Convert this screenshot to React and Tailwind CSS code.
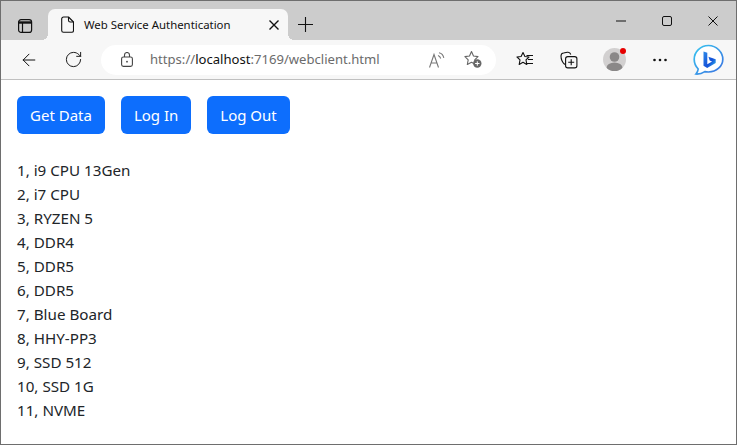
import { ArrowLeft, RotateCw } from "lucide-react";

const items = [
  "1, i9 CPU 13Gen",
  "2, i7 CPU",
  "3, RYZEN 5",
  "4, DDR4",
  "5, DDR5",
  "6, DDR5",
  "7, Blue Board",
  "8, HHY-PP3",
  "9, SSD 512",
  "10, SSD 1G",
  "11, NVME",
];

const TabsIcon = () => (
  <svg width="16" height="16" viewBox="0 0 16 16" fill="none" stroke="#111" strokeWidth="1.2">
    <rect x="1.6" y="1.600" width="13" height="12.800" rx="2.500" />
    <path d="M1.600 4.500h13" strokeWidth="2.400" />
    <path d="M5.500 5v9" />
  </svg>
);

const FileIcon = () => (
  <svg width="13" height="17" viewBox="0 0 13 17" fill="none" stroke="#111" strokeWidth="1.1" strokeLinejoin="round">
    <path d="M2.500 1h5l5 5v8.500a1.800 1.800 0 0 1-1.800 1.800H2.500A1.800 1.800 0 0 1 .7 14.500V2.800A1.800 1.800 0 0 1 2.500 1z" />
    <path d="M7.500 1v3.200a1.800 1.800 0 0 0 1.800 1.800h3.200" />
  </svg>
);

const CloseIcon = ({ size, width }) => (
  <svg width={size} height={size} viewBox="0 0 10 10" stroke="#111" strokeWidth={width}>
    <path d="M.5.500l9 9M9.500.500l-9 9" />
  </svg>
);

const PlusIcon = () => (
  <svg width="15" height="15" viewBox="0 0 15 15" stroke="#111" strokeWidth="1.100">
    <path d="M7.500 0v15M0 7.500h15" />
  </svg>
);

const MinIcon = () => (
  <svg width="10" height="2" viewBox="0 0 10 2" stroke="#111" strokeWidth="1">
    <path d="M0 1h10" />
  </svg>
);

const MaxIcon = () => (
  <svg width="10" height="10" viewBox="0 0 10 10" fill="none" stroke="#111" strokeWidth="1">
    <rect x=".5" y=".5" width="9" height="9" rx="1.500" />
  </svg>
);

const LockIcon = () => (
  <svg width="12" height="15" viewBox="0 0 12 15" fill="none" stroke="#444" strokeWidth="1.100">
    <rect x=".6" y="5" width="10.800" height="9.400" rx="1.800" />
    <path d="M3.500 5V3a2.500 2.500 0 0 1 5 0v2" />
    <circle cx="6" cy="9.700" r=".9" fill="#444" stroke="none" />
  </svg>
);

const ReadAloud = () => (
  <svg width="16" height="16" viewBox="0 0 16 16" fill="none" stroke="#777" strokeWidth="1.100">
    <path d="M.5 15.500 L5 2.500 L9.500 15.500 M2 11h6" />
    <path d="M9 3.500c1.500.5 2.300 1.500 2.700 3M10 .8c2.500.6 4.300 2.600 4.800 5" />
  </svg>
);

const FavAdd = () => (
  <svg width="18" height="19" viewBox="0 0 18 19" fill="none">
    <path d="M7.500 1.500l2 4.500 4.500.6-3.300 3.200.9 4.700-4.100-2.300-4.200 2.300.9-4.700L.9 6.600 5.500 6z" stroke="#666" strokeWidth="1.100" strokeLinejoin="round" />
    <circle cx="13.300" cy="13.500" r="4.200" fill="#666" />
    <path d="M13.300 11.300v4.400M11.100 13.500h4.400" stroke="#fff" strokeWidth="1" />
  </svg>
);

const Favorites = () => (
  <svg width="17" height="17" viewBox="0 0 17 17" fill="none" stroke="#111" strokeWidth="1.100">
    <path d="M7 1.500l1.900 4 4.100.5-3 2.900.8 4.600L7 11.300l-3.800 2.200.8-4.600L1 6l4.100-.5z" strokeLinejoin="round" />
    <path d="M10.500 4.500H17M12 8.500h5M11 12.500h6" />
  </svg>
);

const Collections = () => (
  <svg width="18" height="18" viewBox="0 0 18 18" fill="none" stroke="#111" strokeWidth="1.100">
    <path d="M4.800 13.500C2.500 11.500 1 8.500 1 5c0-1.500 1-2.800 2.500-3l3.800-.7c1.700-.3 3 .6 3.500 2.200" />
    <rect x="5.600" y="5.600" width="11.300" height="11.300" rx="2.200" />
    <path d="M11.200 8.200v6.100M8.200 11.200h6" />
  </svg>
);

const Profile = () => (
  <div className="relative w-[23px] h-[23px] rounded-full bg-[#d2d0d0]">
    <svg width="23" height="23" viewBox="0 0 23 23" className="rounded-full">
      <circle cx="11.500" cy="9" r="4.800" fill="#8a8888" />
      <ellipse cx="11.500" cy="20" rx="8" ry="5.500" fill="#8a8888" />
    </svg>
    <span className="absolute top-0 right-0 w-[6px] h-[6px] rounded-full bg-[#e60000]" />
  </div>
);

const Dots = () => (
  <svg width="14" height="4" viewBox="0 0 14 4" fill="#111">
    <circle cx="1.500" cy="2" r="1.300" />
    <circle cx="7" cy="2" r="1.300" />
    <circle cx="12.500" cy="2" r="1.300" />
  </svg>
);

const Bing = () => (
  <svg width="31" height="32" viewBox="0 0 31 32" fill="none">
    <defs>
      <linearGradient id="ring" x1="0" y1="0" x2="1" y2="1">
        <stop offset="0" stopColor="#38c6f0" />
        <stop offset="1" stopColor="#3a6fe0" />
      </linearGradient>
      <linearGradient id="bee" x1="0" y1="0" x2="1" y2="1">
        <stop offset="0" stopColor="#2f8be8" />
        <stop offset="0.6" stopColor="#1450d8" />
        <stop offset="1" stopColor="#35c5ee" />
      </linearGradient>
    </defs>
    <path d="M15.500 1.500C7.500 1.500 1.200 7.700 1.200 15.200c0 3.800 1.500 7.200 4 9.800-.2 1.900-1 3.500-2.200 5 3.300.2 6.400-.8 8.800-2.400 1.200.3 2.400.4 3.700.4 8 0 14.300-5.900 14.300-12.800S23.500 1.500 15.500 1.500z" fill="#fff" stroke="url(#ring)" strokeWidth="1.700" />
    <path d="M10.500 7.500l3.800 1.300v11.400l4.800-2.800-2.400-1-1.300-3.700 7.300 2.500v3.700l-8.500 5-3.700-2.100z" fill="url(#bee)" />
  </svg>
);

const Btn = ({ children }) => (
  <button className="h-[38px] px-[13px] rounded-[6px] bg-[#0d6efd] text-white text-[15px]">{children}</button>
);

export default function App() {
  return (
    <div className="w-[737px] h-[445px] overflow-hidden bg-white border border-[#6e6e6e] flex flex-col font-['Noto_Sans','Open_Sans',sans-serif]">
      <div className="h-[39px] bg-[#cccccc] flex items-end shrink-0">
        <div className="w-[47px] h-full flex items-center justify-center pt-[10px]">
          <TabsIcon />
        </div>
        <div className="relative w-[240px] h-[31px] bg-[#f7f7f7] rounded-t-[7px] flex items-center pl-[13px] pr-[9px]">
          <span className="absolute bottom-0 -left-[6px] w-[6px] h-[6px] bg-[radial-gradient(circle_at_0_0,#cccccc_6px,#f7f7f7_6px)]" />
          <span className="absolute bottom-0 -right-[6px] w-[6px] h-[6px] bg-[radial-gradient(circle_at_100%_0,#cccccc_6px,#f7f7f7_6px)]" />
          <FileIcon />
          <span className="ml-[10px] text-[11.4px] text-[#111] flex-1 whitespace-nowrap">Web Service Authentication</span>
          <CloseIcon size={10} width={1.4} />
        </div>
        <div className="w-[34px] h-[31px] flex items-center justify-center">
          <PlusIcon />
        </div>
        <div className="flex-1" />
        <div className="h-full flex items-center">
          <div className="w-[46px] flex justify-center"><MinIcon /></div>
          <div className="w-[46px] flex justify-center"><MaxIcon /></div>
          <div className="w-[46px] flex justify-center"><CloseIcon size={10} width={1} /></div>
        </div>
      </div>
      <div className="h-[40px] bg-[#f7f7f7] border-b border-[#c0c0c0] flex items-center shrink-0">
        <div className="w-[100px] flex items-center pl-[18px] gap-[25px]">
          <ArrowLeft size={20} strokeWidth={1.2} color="#111" />
          <RotateCw size={19} strokeWidth={1.2} color="#111" />
        </div>
        <div className="w-[395px] h-[30px] rounded-full bg-white flex items-center pl-[20px] pr-[14px]">
          <LockIcon />
          <span className="ml-[17px] text-[13.1px] text-[#6b6b6b] flex-1 whitespace-nowrap">
            https://<span className="text-[#111]">localhost</span>:7169/webclient.html
          </span>
          <div className="flex items-center gap-[19px]">
            <ReadAloud />
            <FavAdd />
          </div>
        </div>
        <div className="flex items-center pl-[6px]">
          <div className="w-[44px] flex justify-center"><Favorites /></div>
          <div className="w-[45px] flex justify-center"><Collections /></div>
          <div className="w-[46px] flex justify-center"><Profile /></div>
          <div className="w-[45px] flex justify-center"><Dots /></div>
          <div className="ml-[11px]"><Bing /></div>
        </div>
      </div>
      <div className="flex-1 px-[16px] pt-[16px]">
        <div className="flex gap-[16px]">
          <Btn>Get Data</Btn>
          <Btn>Log In</Btn>
          <Btn>Log Out</Btn>
        </div>
        <ul className="mt-[24px] text-[15.2px] leading-[24px] text-[#212529]">
          {items.map((item) => (
            <li key={item}>{item}</li>
          ))}
        </ul>
      </div>
    </div>
  );
}
